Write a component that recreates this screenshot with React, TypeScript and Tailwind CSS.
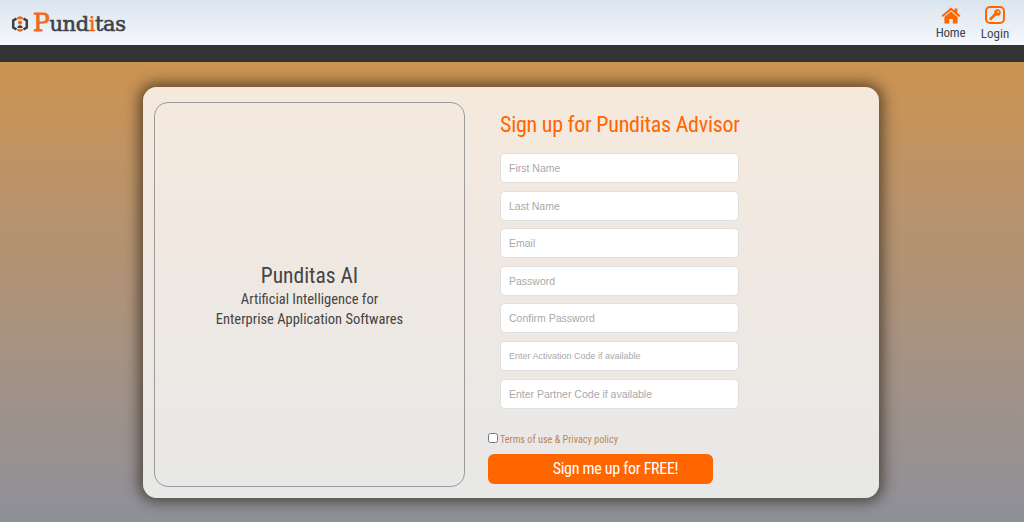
import React from "react";

const abel = "[font-family:'Roboto_Condensed','Liberation_Sans_Narrow',Roboto,sans-serif]";

function Field({ placeholder, small }: { placeholder: string; small?: boolean }) {
  return (
    <input
      type="text"
      placeholder={placeholder}
      className={`block h-[30px] w-[239px] rounded-[5px] border border-[#dfdfdf] bg-white px-[8px] [font-family:'Liberation_Sans',Arial,sans-serif] text-[#555] placeholder:text-[#a9a9a9] ${small ? "text-[9px]" : "text-[10.5px]"}`}
    />
  );
}

function LogoMark() {
  return (
    <svg width="16" height="18" viewBox="0 0 16 18" aria-hidden="true">
      <path d="M4.5 3.6 1.2 5.5v7l3.3 1.9" fill="none" stroke="#3d3d3d" strokeWidth="2.4" />
      <path d="M11.5 3.6l3.3 1.9v7l-3.3 1.9" fill="none" stroke="#3d3d3d" strokeWidth="2.4" />
      <path d="M5 2.6 8 1l3 1.6v1.6H5z" fill="#f26a1b" />
      <path d="M5 14h6v1.4L8 17l-3-1.6z" fill="#f26a1b" />
      <circle cx="8" cy="7.6" r="2.1" fill="#f26a1b" />
      <path d="M5.4 13c0-1.8 1-2.8 2.6-2.8s2.6 1 2.6 2.8z" fill="#3d3d3d" />
    </svg>
  );
}

export default function App() {
  return (
    <div className="flex h-[522px] w-[1024px] flex-col overflow-hidden">
      <header className="flex h-[45px] shrink-0 items-start justify-between bg-gradient-to-b from-[#dae4ef] to-[#f5f8fc] pl-[12px] pr-[16px]">
        <div className="mt-[10px] flex items-center gap-[5px]">
          <LogoMark />
          <span className="[font-family:'DejaVu_Serif',serif] text-[21px] font-normal leading-[26px] tracking-[-0.4px] text-[#3f4349] [-webkit-text-stroke:0.6px_#3f4349]">
            <span className="text-[25px] text-[#f26a1b] [-webkit-text-stroke:0.8px_#f26a1b]">P</span>und<span className="text-[#f26a1b] [-webkit-text-stroke:0.6px_#f26a1b]">i</span>tas
          </span>
        </div>
        <nav className={`flex items-start gap-[17px] text-[#3f4652] ${abel}`}>
          <div className="mt-[7px] flex w-[29px] flex-col items-center">
            <svg width="20" height="17" viewBox="0 0 20 17" aria-hidden="true">
              <path d="M10 0.5 0.5 8.6l1.3 1.4L10 3.2l8.2 6.8 1.3-1.4-3.2-2.8V1.5h-2.6v2.1z" fill="#ff6600" />
              <path d="M10 4.6 3.4 10v6.5h4.8v-4.6h3.6v4.6h4.8V10z" fill="#ff6600" />
            </svg>
            <span className="mt-[1px] text-[13px] leading-[15px] tracking-[-0.2px]">Home</span>
          </div>
          <div className="mt-[6px] flex w-[26px] flex-col items-center">
            <svg width="20" height="18" viewBox="0 0 20 18" aria-hidden="true">
              <rect x="1" y="1" width="18" height="16" rx="4" fill="none" stroke="#ff6600" strokeWidth="2" />
              <circle cx="12.5" cy="6.5" r="3.2" fill="#ff6600" />
              <path d="M10.5 8 5 13.6" stroke="#ff6600" strokeWidth="2.6" />
              <circle cx="13.2" cy="5.8" r="0.9" fill="#fff" />
            </svg>
            <span className="mt-[2px] text-[13px] leading-[15px]">Login</span>
          </div>
        </nav>
      </header>
      <div className="h-[17px] shrink-0 bg-[#333333]" />
      <main className="flex-1 bg-gradient-to-b from-[#cc9350] to-[#8e9099] pt-[25px]">
        <section className="ml-[143px] flex h-[411px] w-[736px] rounded-[14px] bg-gradient-to-b from-[#f5e9dd] to-[#e8e8e8] pl-[11px] pt-[15px] shadow-[0_0_14px_4px_rgba(40,30,20,0.65)]">
          <div className={`flex h-[385px] w-[311px] flex-col items-center justify-center rounded-[14px] border border-[#9a9a9a] pt-[2px] text-center text-[#444] ${abel}`}>
            <h2 className="text-[21.5px] font-normal leading-[28px]">Punditas AI</h2>
            <p className="text-[14.5px] leading-[20px]">Artificial Intelligence for</p>
            <p className="text-[14.5px] leading-[20px]">Enterprise Application Softwares</p>
          </div>
          <div className="ml-[23px] flex flex-col">
            <h1 className={`ml-[12px] mt-[8px] text-[22px] font-normal leading-[30px] tracking-[-0.25px] text-[#ff6600] ${abel}`}>
              Sign up for Punditas Advisor
            </h1>
            <div className="ml-[12px] mt-[13px] flex flex-col gap-[7.6px]">
              <Field placeholder="First Name" />
              <Field placeholder="Last Name" />
              <Field placeholder="Email" />
              <Field placeholder="Password" />
              <Field placeholder="Confirm Password" />
              <Field placeholder="Enter Activation Code if available" small />
              <Field placeholder="Enter Partner Code if available" />
            </div>
            <label className={`mt-[24px] flex h-[12px] items-center gap-[2px] text-[10.2px] text-[#c08457] ${abel}`}>
              <input type="checkbox" className="m-0 mt-[-2px] h-[10px] w-[10px]" />
              <span className="mt-[2px]">Terms of use &amp; Privacy policy</span>
            </label>
            <button className={`mt-[9px] h-[30px] w-[225px] rounded-[6px] bg-[#ff6600] pl-[30px] text-[16px] leading-[30px] tracking-[-0.3px] text-white ${abel}`}>
              Sign me up for FREE!
            </button>
          </div>
        </section>
      </main>
    </div>
  );
}
